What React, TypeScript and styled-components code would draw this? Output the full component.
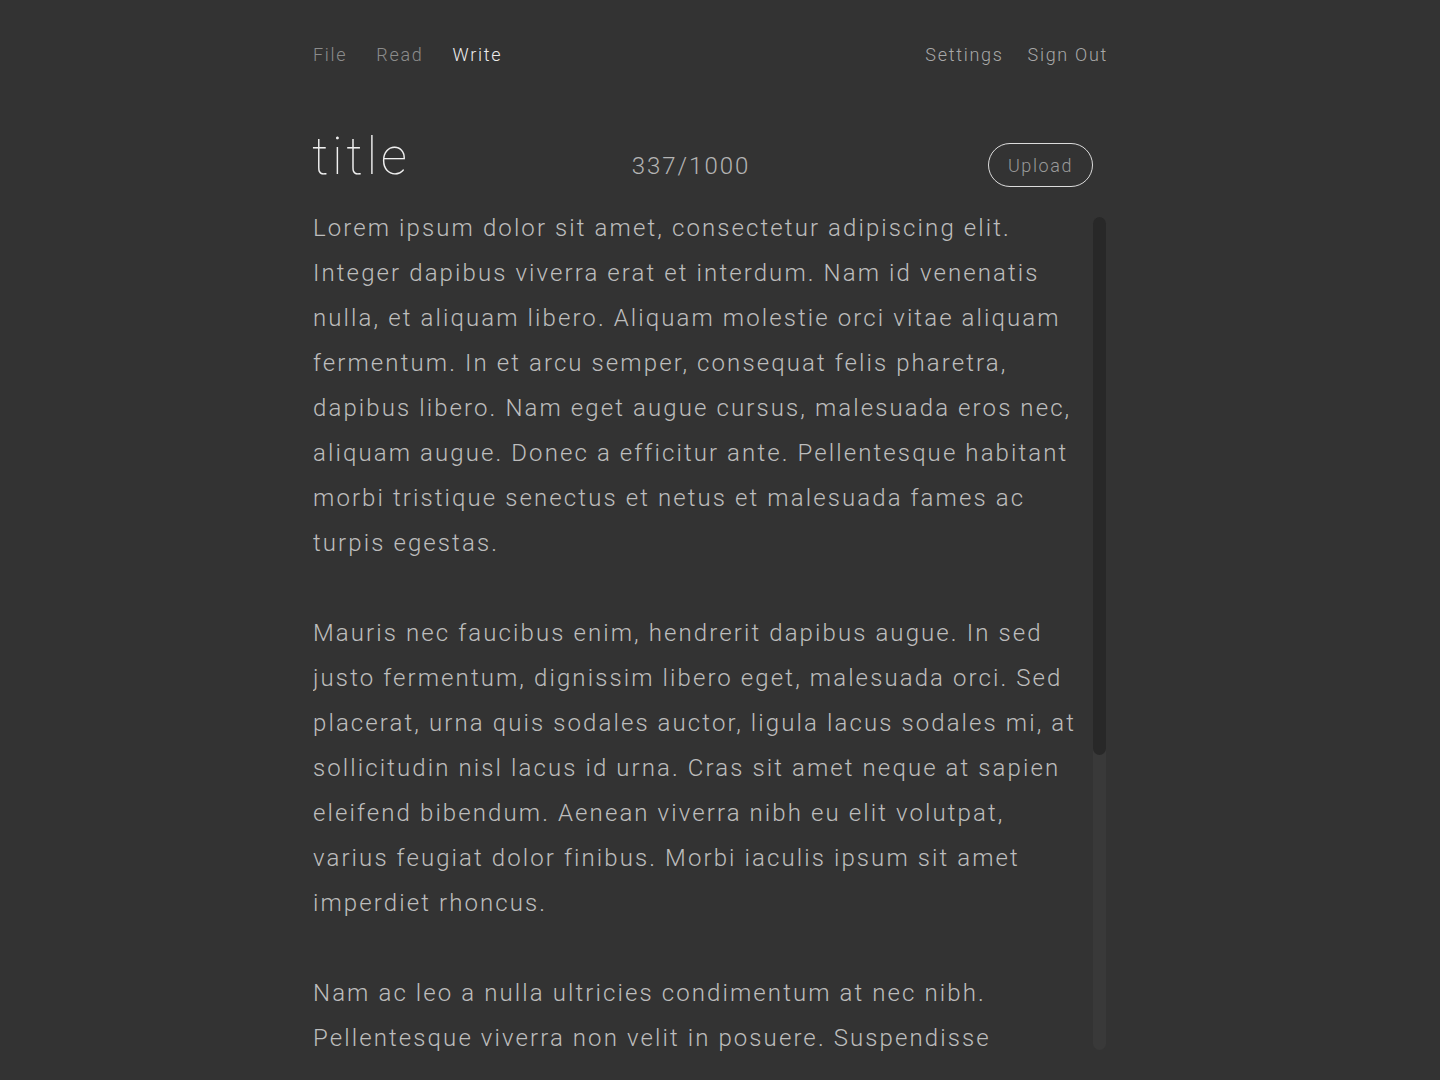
import styled, { createGlobalStyle } from "styled-components";

const GlobalStyle = createGlobalStyle`
  html, body {
    margin: 0;
    padding: 0;
    background: #333333;
    height: 100%;
    overflow: hidden;
  }
  body {
    font-family: Roboto, "Liberation Sans", sans-serif;
    font-weight: 300;
  }
`;

const text = `Lorem ipsum dolor sit amet, consectetur adipiscing elit. Integer dapibus viverra erat et interdum. Nam id venenatis nulla, et aliquam libero. Aliquam molestie orci vitae aliquam fermentum. In et arcu semper, consequat felis pharetra, dapibus libero. Nam eget augue cursus, malesuada eros nec, aliquam augue. Donec a efficitur ante. Pellentesque habitant morbi tristique senectus et netus et malesuada fames ac turpis egestas.

Mauris nec faucibus enim, hendrerit dapibus augue. In sed justo fermentum, dignissim libero eget, malesuada orci. Sed placerat, urna quis sodales auctor, ligula lacus sodales mi, at sollicitudin nisl lacus id urna. Cras sit amet neque at sapien eleifend bibendum. Aenean viverra nibh eu elit volutpat, varius feugiat dolor finibus. Morbi iaculis ipsum sit amet imperdiet rhoncus.

Nam ac leo a nulla ultricies condimentum at nec nibh. Pellentesque viverra non velit in posuere. Suspendisse vestibulum, lorem quis facilisis tincidunt, magna arcu luctus nisl, vel pulvinar sapien justo in nunc. Proin non nunc eu justo pretium interdum a vitae sapien. Duis vulputate risus sed orci fringilla, eu dictum neque dignissim. Praesent in lectus nec ipsum aliquet gravida. Fusce consequat, elit sed suscipit varius, tortor nisl placerat magna, non tincidunt nibh ante et mi.`;

export default function App() {
  return (
    <>
      <GlobalStyle />
      <Page>
        <Nav>
          <NavGroup>
            <NavLink>File</NavLink>
            <NavLink>Read</NavLink>
            <NavLink active>Write</NavLink>
          </NavGroup>
          <NavGroup right>
            <NavLink light>Settings</NavLink>
            <NavLink light>Sign Out</NavLink>
          </NavGroup>
        </Nav>
        <Header>
          <Title>title</Title>
          <Counter>337/1000</Counter>
          <UploadButton>Upload</UploadButton>
        </Header>
        <Body>
          <Editor defaultValue={text} spellCheck={false} />
          <ScrollTrack aria-hidden>
            <ScrollThumb />
          </ScrollTrack>
        </Body>
      </Page>
    </>
  );
}

const Page = styled.div`
  width: 796px;
  margin-left: 312px;
  height: 100vh;
  display: flex;
  flex-direction: column;
`;

const Nav = styled.nav`
  display: flex;
  justify-content: space-between;
  align-items: center;
  height: 36px;
  margin-top: 36px;
`;

const NavGroup = styled.div<{ right?: boolean }>`
  display: flex;
  gap: ${({ right }) => (right ? "24px" : "29px")};
`;

const NavLink = styled.a<{ active?: boolean; light?: boolean }>`
  font-size: 18px;
  font-weight: 300;
  letter-spacing: 1.7px;
  color: ${({ active, light }) => (active ? "#ececec" : light ? "#a8a8a8" : "#8c8c8c")};
  cursor: pointer;
  &:first-child {
    margin-left: 1px;
  }
`;

const Header = styled.div`
  display: grid;
  grid-template-columns: 1fr auto 1fr;
  align-items: center;
  margin-top: 64px;
  height: 56px;
  padding-right: 15px;
`;

const Title = styled.h1`
  margin: -15px 0 0;
  font-size: 52px;
  font-weight: 100;
  letter-spacing: 3.6px;
  color: #f0f0f0;
`;

const Counter = styled.div`
  font-size: 24px;
  font-weight: 300;
  letter-spacing: 2px;
  color: #b4b4b4;
  margin: 4px 23px 0 0;
`;

const UploadButton = styled.button`
  justify-self: end;
  width: 105px;
  height: 44px;
  margin-top: 2px;
  border: 1.5px solid #dcdcdc;
  border-radius: 22px;
  background: transparent;
  color: #9a9a9a;
  font-family: Roboto, "Liberation Sans", sans-serif;
  font-weight: 300;
  font-size: 18px;
  letter-spacing: 1.6px;
  cursor: pointer;
`;

const Body = styled.div`
  flex: 1;
  display: flex;
  margin-top: 14px;
  margin-bottom: 20px;
  min-height: 0;
`;

const Editor = styled.textarea`
  flex: 1;
  margin: 0 14px 0 1px;
  padding: 0;
  border: none;
  outline: none;
  resize: none;
  overflow: hidden;
  background: transparent;
  color: #bdbdbd;
  font-family: Roboto, "Liberation Sans", sans-serif;
  font-weight: 300;
  font-size: 24px;
  line-height: 45px;
  letter-spacing: 2.1px;
`;

const ScrollTrack = styled.div`
  width: 13px;
  margin: 11px 2px 10px 0;
  border-radius: 7px;
  background: #393939;
  display: flex;
  flex-direction: column;
`;

const ScrollThumb = styled.div`
  height: 538px;
  border-radius: 7px;
  background: #282828;
`;
